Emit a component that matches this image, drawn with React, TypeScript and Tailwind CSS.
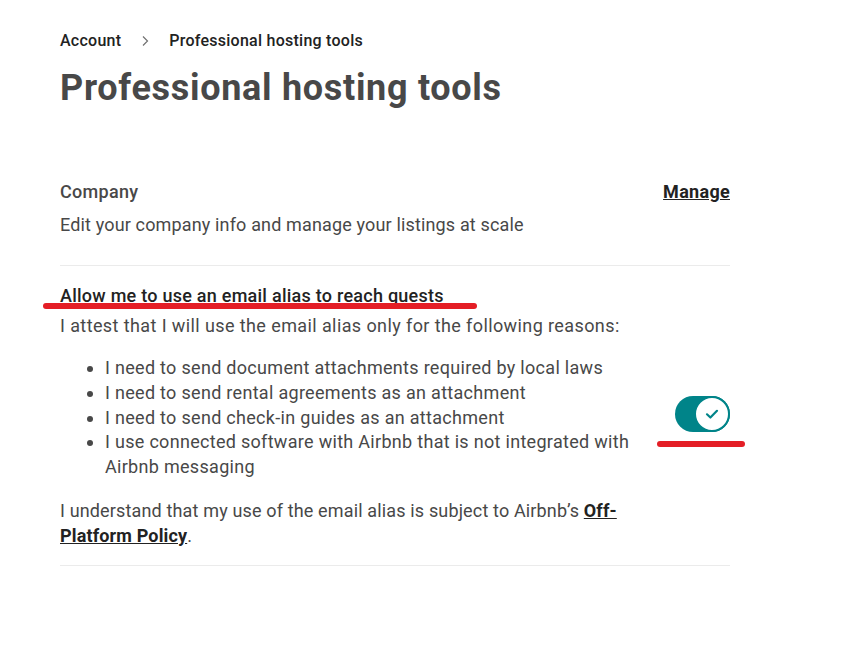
import React from 'react'

const reasons = [
  'I need to send document attachments required by local laws',
  'I need to send rental agreements as an attachment',
  'I need to send check-in guides as an attachment',
  'I use connected software with Airbnb that is not integrated with Airbnb messaging',
]

const App = () => {
  return (
    <div className="min-h-[662px] bg-white font-['Roboto',sans-serif] text-[#484848]">
      <div className="relative ml-[60px] w-[670px] pt-[31px]">
        {/* Breadcrumb */}
        <nav className="flex items-center text-[16px] leading-[20px] font-medium tracking-[0.25px] text-[#222222]">
          <span>Account</span>
          <svg className="mx-[18px] h-[12px] w-[12px]" viewBox="0 0 12 12" fill="none">
            <path d="M4 1.5 8.5 6 4 10.5" stroke="#717171" strokeWidth="1.2" />
          </svg>
          <span>Professional hosting tools</span>
        </nav>

        <h1 className="mt-[17px] text-[36px] leading-[40px] font-bold tracking-[0.7px] text-[#484848]">
          Professional hosting tools
        </h1>

        {/* Company */}
        <section className="mt-[72px] border-b border-[#ebebeb] pb-[28px] tracking-[0.3px]">
          <div className="flex items-center justify-between">
            <h2 className="text-[18px] leading-[24px] font-medium text-[#484848]">Company</h2>
            <a href="#" className="text-[18px] leading-[24px] font-bold text-[#222222] underline">
              Manage
            </a>
          </div>
          <p className="mt-[9px] text-[18px] leading-[24px] tracking-[0.15px]">
            Edit your company info and manage your listings at scale
          </p>
        </section>

        {/* Email alias */}
        <section className="relative border-b border-[#ebebeb] pt-[18px] pb-[17px] tracking-[0.3px]">
          <div className="flex items-center gap-[40px]">
            <div className="flex-1">
              <h2 className="text-[18px] leading-[24px] font-medium tracking-[0.25px] text-[#222222]">
                Allow me to use an email alias to reach guests
              </h2>
              <p className="mt-[6px] text-[18px] leading-[24px] tracking-[0.4px]">
                I attest that I will use the email alias only for the following reasons:
              </p>
              <ul className="mt-[18px] list-disc pl-[45px] text-[18px] leading-[24.75px]">
                {reasons.map((r) => (
                  <li key={r}>{r}</li>
                ))}
              </ul>
              <p className="mt-[19px] text-[18px] leading-[24.75px] tracking-[0.15px]">
                I understand that my use of the email alias is subject to Airbnb’s{' '}
                <a href="#" className="font-bold text-[#222222] underline">
                  Off-Platform Policy
                </a>
                .
              </p>
            </div>
            {/* Toggle */}
            <button className="relative mt-[-4px] h-[36px] w-[55px] shrink-0 rounded-full bg-[#008489]">
              <span className="absolute right-0 top-0 flex h-[36px] w-[36px] items-center justify-center rounded-full border-2 border-[#008489] bg-white">
                <svg className="h-[16px] w-[16px]" viewBox="0 0 16 16" fill="none">
                  <path d="M3 8.3 6.4 11.5 13 4.8" stroke="#008489" strokeWidth="2.2" strokeLinecap="round" strokeLinejoin="round" />
                </svg>
              </span>
            </button>
          </div>

          {/* Red annotation marks */}
          <span className="absolute left-[-17px] top-[37px] h-[6px] w-[434px] rounded-full bg-[#e41e26]" />
          <span className="absolute left-[597px] top-[175px] h-[6px] w-[88px] rounded-full bg-[#e41e26]" />
        </section>
      </div>
    </div>
  )
}

export default App
